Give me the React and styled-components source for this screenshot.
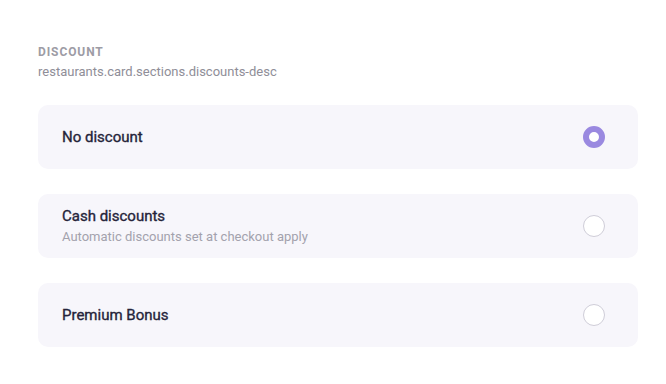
import React, { useState } from "react";
import styled, { createGlobalStyle } from "styled-components";

const GlobalStyle = createGlobalStyle`
  body {
    margin: 0;
    background: #ffffff;
    font-family: Roboto, "Liberation Sans", sans-serif;
  }
`;

const options = [
  { id: "none", title: "No discount" },
  { id: "cash", title: "Cash discounts", desc: "Automatic discounts set at checkout apply" },
  { id: "premium", title: "Premium Bonus" },
];

const App = () => {
  const [selected, setSelected] = useState("none");

  return (
    <Wrapper>
      <GlobalStyle />
      <Header>
        <Label>Discount</Label>
        <Description>restaurants.card.sections.discounts-desc</Description>
      </Header>

      <List>
        {options.map((opt) => (
          <Card key={opt.id} onClick={() => setSelected(opt.id)}>
            <CardText>
              <Title>{opt.title}</Title>
              {opt.desc && <Sub>{opt.desc}</Sub>}
            </CardText>
            <Radio $checked={selected === opt.id} />
          </Card>
        ))}
      </List>
    </Wrapper>
  );
};

const Wrapper = styled.section`
  padding: 45px 28px 0 38px;
`;

const Header = styled.div`
  display: flex;
  flex-direction: column;
  gap: 4px;
  margin-bottom: 25px;
`;

const Label = styled.h4`
  margin: 0;
  font-size: 12px;
  line-height: 15px;
  font-weight: 700;
  letter-spacing: 0.9px;
  text-transform: uppercase;
  color: #9d9ca5;
`;

const Description = styled.p`
  margin: 0;
  font-size: 13px;
  line-height: 16px;
  color: #8f8e98;
`;

const List = styled.div`
  display: flex;
  flex-direction: column;
  gap: 25px;
`;

const Card = styled.div`
  display: flex;
  align-items: center;
  justify-content: space-between;
  height: 64px;
  box-sizing: border-box;
  padding: 0 33px 0 24px;
  background: #f7f6fb;
  border-radius: 10px;
  cursor: pointer;
`;

const CardText = styled.div`
  display: flex;
  flex-direction: column;
  gap: 3px;
`;

const Title = styled.span`
  font-size: 15px;
  line-height: 19px;
  font-weight: 400;
  color: #25243a;
  -webkit-text-stroke: 0.35px #25243a;
`;

const Sub = styled.span`
  font-size: 13px;
  line-height: 16px;
  color: #a3a2ad;
`;

const Radio = styled.span`
  width: 22px;
  height: 22px;
  box-sizing: border-box;
  border-radius: 50%;
  flex-shrink: 0;
  background: #ffffff;
  border: ${({ $checked }) => ($checked ? "6px solid #9a89e0" : "1px solid #cfcdd8")};
`;

export default App;
